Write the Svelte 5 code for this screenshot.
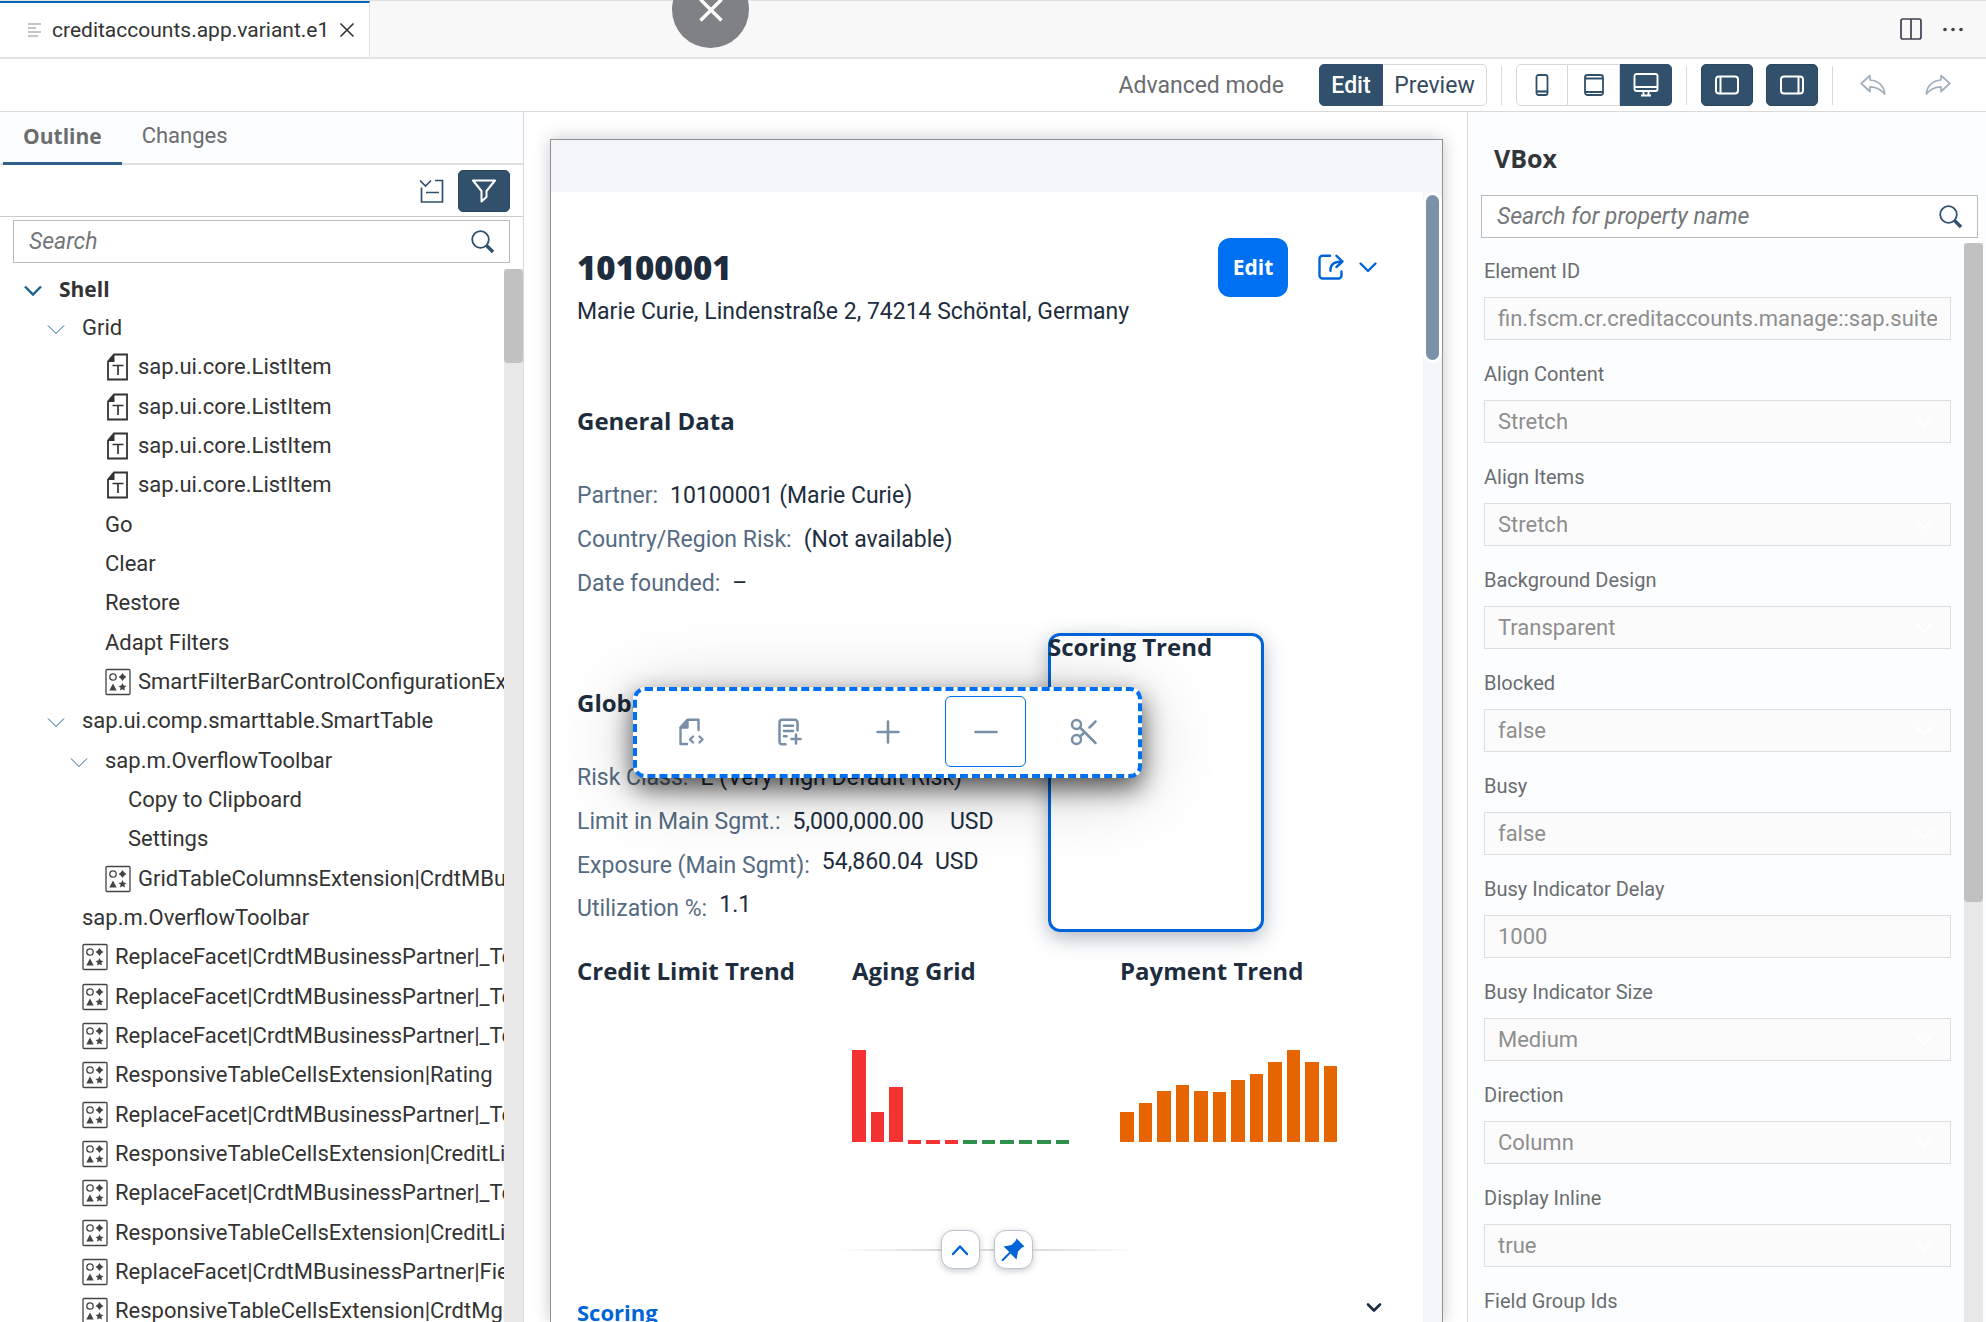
<script>
  const tree = [
    { level: 0, text: 'Shell', open: true },
    { level: 1, text: 'Grid', open: true },
    { level: 2, text: 'sap.ui.core.ListItem', icon: 'text' },
    { level: 2, text: 'sap.ui.core.ListItem', icon: 'text' },
    { level: 2, text: 'sap.ui.core.ListItem', icon: 'text' },
    { level: 2, text: 'sap.ui.core.ListItem', icon: 'text' },
    { level: 2, text: 'Go' },
    { level: 2, text: 'Clear' },
    { level: 2, text: 'Restore' },
    { level: 2, text: 'Adapt Filters' },
    { level: 2, text: 'SmartFilterBarControlConfigurationExtension', icon: 'ext' },
    { level: 1, text: 'sap.ui.comp.smarttable.SmartTable', open: true },
    { level: 2, text: 'sap.m.OverflowToolbar', open: true },
    { level: 3, text: 'Copy to Clipboard' },
    { level: 3, text: 'Settings' },
    { level: 2, text: 'GridTableColumnsExtension|CrdtMBusinessPartner', icon: 'ext' },
    { level: 1, text: 'sap.m.OverflowToolbar' },
    { level: 1, text: 'ReplaceFacet|CrdtMBusinessPartner|_Text', icon: 'ext' },
    { level: 1, text: 'ReplaceFacet|CrdtMBusinessPartner|_Text', icon: 'ext' },
    { level: 1, text: 'ReplaceFacet|CrdtMBusinessPartner|_Text', icon: 'ext' },
    { level: 1, text: 'ResponsiveTableCellsExtension|Rating', icon: 'ext' },
    { level: 1, text: 'ReplaceFacet|CrdtMBusinessPartner|_Text', icon: 'ext' },
    { level: 1, text: 'ResponsiveTableCellsExtension|CreditLimit', icon: 'ext' },
    { level: 1, text: 'ReplaceFacet|CrdtMBusinessPartner|_Text', icon: 'ext' },
    { level: 1, text: 'ResponsiveTableCellsExtension|CreditLimit', icon: 'ext' },
    { level: 1, text: 'ReplaceFacet|CrdtMBusinessPartner|Field', icon: 'ext' },
    { level: 1, text: 'ResponsiveTableCellsExtension|CrdtMgmt', icon: 'ext' }
  ];

  const props = [
    { name: 'Element ID', value: 'fin.fscm.cr.creditaccounts.manage::sap.suite.ui', kind: 'input' },
    { name: 'Align Content', value: 'Stretch', kind: 'select' },
    { name: 'Align Items', value: 'Stretch', kind: 'select' },
    { name: 'Background Design', value: 'Transparent', kind: 'select' },
    { name: 'Blocked', value: 'false', kind: 'select' },
    { name: 'Busy', value: 'false', kind: 'select' },
    { name: 'Busy Indicator Delay', value: '1000', kind: 'input' },
    { name: 'Busy Indicator Size', value: 'Medium', kind: 'select' },
    { name: 'Direction', value: 'Column', kind: 'select' },
    { name: 'Display Inline', value: 'true', kind: 'select' },
    { name: 'Field Group Ids', value: '', kind: 'input' }
  ];

  const aging = [
    { h: 92, tone: 'bad' }, { h: 30, tone: 'bad' }, { h: 55, tone: 'bad' },
    { h: 0, tone: 'bad' }, { h: 0, tone: 'bad' }, { h: 0, tone: 'bad' },
    { h: 0, tone: 'good' }, { h: 0, tone: 'good' }, { h: 0, tone: 'good' },
    { h: 0, tone: 'good' }, { h: 0, tone: 'good' }, { h: 0, tone: 'good' }
  ];
  const payment = [30, 39, 51, 57, 51, 50, 62, 68, 80, 92, 80, 76].map((h) => ({ h, tone: 'warn' }));
</script>

{#snippet magnifier()}
  <svg class="magnifier" width="26" height="26" viewBox="0 0 26 26" fill="none" aria-hidden="true">
    <circle cx="10.5" cy="10.5" r="8.3" stroke-width="1.8" />
    <path d="M16.5 16.5L23 23" stroke-width="3.4" />
  </svg>
{/snippet}

{#snippet chart(bars)}
  <div class="chart">
    {#each bars as bar}
      <span class="bar {bar.tone}" class:zero={bar.h === 0} style:height="{bar.h || 4}px"></span>
    {/each}
  </div>
{/snippet}

<div class="app">
  <header class="tabstrip">
    <div class="file-tab">
      <svg width="14" height="16" viewBox="0 0 14 16" fill="none" stroke="#c5c5c5" stroke-width="2" aria-hidden="true">
        <path d="M0 2h13M0 6h8M0 10h13M0 14h10" />
      </svg>
      <span>creditaccounts.app.variant.e1</span>
      <button class="plain" aria-label="Close tab">
        <svg width="16" height="16" viewBox="0 0 16 16" fill="none" stroke="#333" stroke-width="1.6"><path d="M1.5 1.5l13 13M14.5 1.5l-13 13" /></svg>
      </button>
    </div>
    <div class="tab-actions">
      <button class="plain" aria-label="Split editor">
        <svg width="22" height="22" viewBox="0 0 22 22" fill="none" stroke="#3f4150" stroke-width="1.7"><rect x="1" y="1" width="20" height="20" rx="2" /><path d="M11 1v20" /></svg>
      </button>
      <button class="plain" aria-label="More actions">
        <svg width="22" height="22" viewBox="0 0 22 22" fill="#424242"><circle cx="3" cy="11.5" r="1.8" /><circle cx="11" cy="11.5" r="1.8" /><circle cx="19" cy="11.5" r="1.8" /></svg>
      </button>
    </div>
    <button class="bubble" aria-label="Dismiss">
      <svg width="24" height="24" viewBox="0 0 24 24" fill="none" stroke="#fff" stroke-width="3.4"><path d="M1.5 1.5l21 21M22.5 1.5l-21 21" /></svg>
    </button>
  </header>

  <div class="toolbar">
    <button class="advanced plain">Advanced mode</button>
    <div class="segmented mode">
      <button class="on">Edit</button>
      <button>Preview</button>
    </div>
    <span class="sep"></span>
    <div class="segmented devices">
      <button aria-label="Phone">
        <svg width="14" height="24" viewBox="0 0 14 24" fill="none" stroke="#30506b" stroke-width="1.8"><rect x="1.5" y="2" width="11" height="20" rx="2" /><path d="M1.5 18.5h11" stroke-width="2.2" /></svg>
      </button>
      <button aria-label="Tablet">
        <svg width="20" height="24" viewBox="0 0 20 24" fill="none" stroke="#30506b" stroke-width="1.8"><rect x="1" y="2" width="18" height="20" rx="2.5" /><path d="M1 5.5h18M1 19h18" /></svg>
      </button>
      <button class="on" aria-label="Desktop">
        <svg width="26" height="24" viewBox="0 0 26 24" fill="none" stroke="#fff" stroke-width="1.9"><rect x="1.5" y="1" width="23" height="17" rx="2" /><path d="M1.5 14h23M10.5 18.5v4M15.5 18.5v4M8 22.5h10" /></svg>
      </button>
    </div>
    <span class="sep"></span>
    <button class="toggle" aria-label="Toggle left panel">
      <svg width="24" height="20" viewBox="0 0 24 20" fill="none" stroke="#fff" stroke-width="2"><rect x="1" y="1.5" width="22" height="17" rx="3" /><path d="M5.5 1.5v17" /></svg>
    </button>
    <button class="toggle" aria-label="Toggle right panel">
      <svg width="24" height="20" viewBox="0 0 24 20" fill="none" stroke="#fff" stroke-width="2"><rect x="1" y="1.5" width="22" height="17" rx="3" /><path d="M18.5 1.5v17" /></svg>
    </button>
    <span class="sep"></span>
    <button class="history" aria-label="Undo">
      <svg width="26" height="22" viewBox="0 0 26 22" fill="none" stroke="#a3afba" stroke-width="1.7" stroke-linejoin="round"><path d="M10 1.5L1.2 9.5L10 17.5V12.8C16 12.6 20.5 15 24.6 20C24 12 18.5 6.6 10 6Z" /></svg>
    </button>
    <button class="history" aria-label="Redo">
      <svg width="26" height="22" viewBox="0 0 26 22" fill="none" stroke="#a3afba" stroke-width="1.7" stroke-linejoin="round"><path d="M16 1.5L24.8 9.5L16 17.5V12.8C10 12.6 5.5 15 1.4 20C2 12 7.5 6.6 16 6Z" /></svg>
    </button>
  </div>

  <div class="workspace">
    <aside class="outline">
      <nav class="tabs">
        <button class="tab active">Outline</button>
        <button class="tab">Changes</button>
      </nav>
      <div class="outline-tools">
        <button class="plain" aria-label="Collapse all">
          <svg width="26" height="26" viewBox="0 0 26 26" fill="none" stroke="#30506b" stroke-width="1.7"><path d="M1 2.5l5.5 5.5L12 2.5M16 2.5h7.5V24H2.5V9.5M7 14.5h13" /></svg>
        </button>
        <button class="filter" aria-label="Filter">
          <svg width="26" height="26" viewBox="0 0 26 26" fill="none" stroke="#fff" stroke-width="2" stroke-linejoin="round"><path d="M2 2.5h22L15.5 13v6l-5 4.5V13Z" /></svg>
        </button>
      </div>
      <div class="search outline-search">
        <input type="text" placeholder="Search" aria-label="Search outline" />
        {@render magnifier()}
      </div>
      <div class="tree-area">
        <ul class="tree">
          {#each tree as node}
            <li class="node level{node.level}">
              <span class="twisty">
                {#if node.open}
                  <button class="plain" aria-label="Collapse {node.text}">
                    <svg width="20" height="12" viewBox="0 0 20 12" fill="none" stroke="#1c6190"><path d="M2 1.5l8 8l8-8" /></svg>
                  </button>
                {/if}
              </span>
              {#if node.icon === 'text'}
                <svg class="node-icon" width="26" height="28" viewBox="0 0 26 28" aria-hidden="true">
                  <path d="M9 1.5H22V26.5H3V8.5Z" fill="none" stroke="#333" stroke-width="1.8" />
                  <path d="M9.5 1V9H2.5Z" fill="#333" />
                  <path d="M7.5 12.5h11M13 12.5V22" fill="none" stroke="#333" stroke-width="1.7" />
                </svg>
              {:else if node.icon === 'ext'}
                <svg class="node-icon" width="26" height="28" viewBox="0 0 26 28" aria-hidden="true">
                  <rect x="1" y="1.500" width="24" height="25" rx="1" fill="none" stroke="#444" stroke-width="1.3" />
                  <circle cx="8" cy="9" r="3.2" fill="none" stroke="#444" stroke-width="1.3" />
                  <path d="M17.5 5l1.6 2.300l2.300 1.700l-2.300 1.700l-1.600 2.300l-1.600-2.300l-2.300-1.700l2.300-1.700Z" fill="#444" />
                  <path d="M8 15.500l3.700 7H4.300Z" fill="#444" />
                  <path d="M17.5 15l1.200 2.600l2.800 .300l-2.100 1.900l.6 2.800l-2.500-1.400l-2.500 1.400l.6-2.800l-2.100-1.900l2.800-.3Z" fill="#444" />
                </svg>
              {/if}
              <span class="node-text">{node.text}</span>
            </li>
          {/each}
        </ul>
        <div class="scrollbar"><div class="thumb"></div></div>
      </div>
    </aside>

    <main class="canvas">
      <div class="frame">
        <div class="shellbar"></div>
        <div class="page">
          <div class="content">
            <div class="title-row">
              <div class="title-block">
                <h1>10100001</h1>
                <p>Marie Curie, Lindenstraße 2, 74214 Schöntal, Germany</p>
              </div>
              <button class="primary">Edit</button>
              <button class="plain share" aria-label="Share">
                <svg width="26" height="26" viewBox="0 0 26 26" fill="none" stroke="#0064d9" stroke-width="2.4" stroke-linecap="round" stroke-linejoin="round"><path d="M12 1.8H4.5a3 3 0 0 0-3 3V21.5a3 3 0 0 0 3 3H20.5a3 3 0 0 0 3-3V17.5" /><path d="M12.5 17C12 11 15.5 7.5 24.5 7.5M18.5 1.8l6 5.7l-6 5.5" /></svg>
                <svg width="28" height="26" viewBox="0 0 28 26" fill="none" stroke="#0064d9" stroke-width="2.4" stroke-linecap="round" stroke-linejoin="round"><path d="M6.5 9.5L14 17l7.5-7.5" /></svg>
              </button>
            </div>

            <section class="group general">
              <h2>General Data</h2>
              <div class="field"><span class="key">Partner:</span><span>10100001 (Marie Curie)</span></div>
              <div class="field"><span class="key">Country/Region Risk:</span><span>(Not available)</span></div>
              <div class="field"><span class="key">Date founded:</span><span>–</span></div>
            </section>

            <div class="facets">
              <section class="group global">
                <h2>Global Data</h2>
                <div class="field"><span class="key">Risk Class:</span><span>E (Very High Default Risk)</span></div>
                <div class="field"><span class="key">Limit in Main Sgmt.:</span><span>5,000,000.00</span><span class="unit">USD</span></div>
                <div class="field measure"><span class="key">Exposure (Main Sgmt):</span><span>54,860.04</span><span>USD</span></div>
                <div class="field measure"><span class="key">Utilization %:</span><span>1.1</span></div>
              </section>
              <section class="selected">
                <h2>Scoring Trend</h2>
                <div class="context" role="toolbar" aria-label="Element actions">
                  <button aria-label="Add fragment">
                    <svg width="28" height="28" viewBox="0 0 28 28" fill="none" stroke="#788fa6" stroke-width="2.4" stroke-linecap="round" stroke-linejoin="round"><path d="M9 26H2.500V9.500L9.500 1.800H20.500V12" /><path d="M9.500 2V9.500H2.800Z" fill="#788fa6" /><path d="M15 18.500l-3 3l3 3M21.500 18.500l3 3l-3 3" /></svg>
                  </button>
                  <button aria-label="Add section">
                    <svg width="28" height="28" viewBox="0 0 28 28" fill="none" stroke="#788fa6" stroke-width="2.500" stroke-linecap="round" stroke-linejoin="round"><path d="M9.500 26.200H6a2.500 2.500 0 0 1-2.500-2.500V4.300a2.500 2.500 0 0 1 2.500-2.500H19a2.500 2.500 0 0 1 2.500 2.500V12.500M8 7.800h9M8 13h9M8 18.300h2.500M15.500 21h9M20 16.500v9" /></svg>
                  </button>
                  <button aria-label="Add">
                    <svg width="28" height="28" viewBox="0 0 28 28" fill="none" stroke="#788fa6" stroke-width="2.600" stroke-linecap="round"><path d="M3.500 14h21M14 3.500v21" /></svg>
                  </button>
                  <button class="focused" aria-label="Remove">
                    <svg width="28" height="28" viewBox="0 0 28 28" fill="none" stroke="#788fa6" stroke-width="2.600" stroke-linecap="round"><path d="M3.500 14h21" /></svg>
                  </button>
                  <button aria-label="Cut">
                    <svg width="28" height="28" viewBox="0 0 28 28" fill="none" stroke="#788fa6" stroke-width="2.500" stroke-linecap="round"><circle cx="6.500" cy="6.500" r="4.500" /><circle cx="6.500" cy="21.500" r="4.500" /><path d="M10 9.500L25.500 25M10 18.500l4.500-4M19.500 9.500L25.500 3.500" /></svg>
                  </button>
                </div>
              </section>
            </div>

            <div class="trends">
              <section><h2>Credit Limit Trend</h2></section>
              <section><h2>Aging Grid</h2>{@render chart(aging)}</section>
              <section><h2>Payment Trend</h2>{@render chart(payment)}</section>
            </div>

            <div class="header-controls">
              <span class="rule left"></span>
              <button class="knob" aria-label="Collapse header">
                <svg width="20" height="20" viewBox="0 0 20 20" fill="none" stroke="#0064d9" stroke-width="2.400" stroke-linecap="round" stroke-linejoin="round"><path d="M3 14l7-7.500L17 14" /></svg>
              </button>
              <span class="rule mid"></span>
              <button class="knob" aria-label="Pin header">
                <svg width="24" height="24" viewBox="0 0 24 24" fill="#0064d9"><path d="M15.500 0.500L23.500 8.500L21 9.500L17 13.500L15.500 21.500L9.500 15.500L2.500 22.700Q1.300 23.500 .7 22.500Q.5 21.700 1.300 21L8.300 14L2.500 8.500L10.500 7L14.500 3Z" /></svg>
              </button>
              <span class="rule right"></span>
            </div>

            <div class="anchor">
              <a href="#scoring">Scoring</a>
              <button class="plain" aria-label="Show sections">
                <svg width="16" height="12" viewBox="0 0 16 12" fill="none" stroke="#1d2d3e" stroke-width="2.600" stroke-linecap="round" stroke-linejoin="round"><path d="M2 2.500l6 6l6-6" /></svg>
              </button>
            </div>
          </div>
          <div class="page-scroll"><div class="page-thumb"></div></div>
        </div>
      </div>
    </main>

    <aside class="properties">
      <h3>VBox</h3>
      <div class="search">
        <input type="text" placeholder="Search for property name" aria-label="Search for property name" />
        {@render magnifier()}
      </div>
      <div class="props-area">
        <div class="props">
          {#each props as p, i}
            <div class="prop">
              <label for="prop-{i}">{p.name}</label>
              {#if p.kind === 'select'}
                <div class="select">
                  <select id="prop-{i}" disabled><option>{p.value}</option></select>
                  <svg width="20" height="12" viewBox="0 0 20 12" fill="none" stroke="#fff" stroke-width="2" aria-hidden="true"><path d="M2 1.500l8 8l8-8" /></svg>
                </div>
              {:else}
                <input id="prop-{i}" type="text" value={p.value} disabled />
              {/if}
            </div>
          {/each}
        </div>
        <div class="scrollbar"><div class="thumb"></div></div>
      </div>
    </aside>
  </div>
</div>

<style>
  :global(body) { background: #fff; }
  * { box-sizing: border-box; }
  .app {
    height: 100vh;
    display: flex;
    flex-direction: column;
    overflow: hidden;
    font: 22px/28px Roboto, sans-serif;
    color: #333;
  }
  button, input, select { font: inherit; color: inherit; margin: 0; }
  button { display: flex; align-items: center; justify-content: center; cursor: pointer; }
  .plain { border: 0; padding: 0; background: none; }
  svg { display: block; flex: none; }
  h1, h2, h3, p, ul { margin: 0; padding: 0; }

  .tabstrip {
    position: relative;
    flex: none;
    display: flex;
    justify-content: space-between;
    height: 59px;
    background: #f8f8f8;
    border-top: 1px solid #e2e2e2;
    border-bottom: 2px solid #e4e4e4;
  }
  .file-tab {
    display: flex;
    align-items: center;
    gap: 10px;
    height: 56px;
    padding: 0 14px 0 28px;
    background: #fff;
    border-top: 2px solid #0064b7;
    border-right: 1px solid #e0e0e0;
    font-size: 21px;
  }
  .tab-actions { display: flex; align-items: center; gap: 20px; padding-right: 22px; }
  .bubble {
    position: absolute;
    left: 672px;
    top: -30px;
    width: 77px;
    height: 77px;
    border: 0;
    border-radius: 50%;
    background: #808184;
  }

  .toolbar {
    flex: none;
    display: flex;
    align-items: center;
    justify-content: flex-end;
    gap: 13px;
    height: 53px;
    padding-right: 22px;
    border-bottom: 1px solid #d9d9d9;
  }
  .advanced { margin-right: 22px; padding-top: 2px; font-size: 23px; color: #6a6d70; }
  .sep { width: 1px; height: 39px; margin: 0 1px; background: #d9d9d9; }
  .segmented { display: flex; height: 42px; }
  .segmented button {
    padding: 0;
    background: #fff;
    border: 1px solid #d5d7d9;
    border-left-width: 0;
    color: #354a5f;
  }
  .segmented button:first-child { border-left-width: 1px; border-radius: 5px 0 0 5px; }
  .segmented button:last-child { border-radius: 0 5px 5px 0; }
  .segmented .on, .segmented .on:first-child { background: #30506b; border-color: #30506b; color: #fff; }
  .mode button { width: 104px; padding-top: 2px; font-size: 23px; }
  .mode button:first-child { width: 64px; font-weight: 500; }
  .devices button { width: 52px; }
  .toggle, .filter { width: 52px; height: 42px; padding: 0; border: 1px solid #2a4760; border-radius: 5px; background: #30506b; }
  .history { width: 52px; height: 42px; padding: 0; border: 0; background: none; }

  .workspace { flex: 1; min-height: 0; display: flex; }

  .outline { flex: none; width: 524px; display: flex; flex-direction: column; border-right: 1px solid #d9d9d9; }
  .tabs { flex: none; display: flex; height: 53px; padding-left: 3px; background: #fcfdfe; border-bottom: 2px solid #dfe1e3; }
  .tab { height: 53px; padding: 0 20px 2px; border: 0; border-bottom: 3px solid transparent; background: none; color: #6a6d70; }
  .tab.active { border-bottom-color: #30608c; font: 700 21px/28px "Open Sans", sans-serif; }
  .outline-tools { flex: none; display: flex; align-items: center; justify-content: flex-end; gap: 13px; height: 52px; padding-right: 13px; border-bottom: 1px solid #ccc; }

  .search { flex: none; display: flex; align-items: center; height: 43px; padding: 0 13px; background: #fff; border: 1px solid #b9bbbd; }
  .search input { flex: 1; min-width: 0; padding: 0 2px; border: 0; outline: 0; background: none; font-size: 23px; font-style: italic; }
  .search input::placeholder { color: #74777a; opacity: 1; }
  .magnifier { stroke: #30506b; }
  .outline-search { margin: 3px 13px 6px; }

  .tree-area { flex: 1; min-height: 0; display: flex; overflow: hidden; }
  .tree { flex: 1; min-width: 0; overflow: hidden; list-style: none; }
  .node { display: flex; align-items: center; height: 39px; white-space: nowrap; }
  .node:nth-child(3n) { height: 40px; }
  .level0 { padding-left: 23px; font: 700 21px/28px "Open Sans", sans-serif; }
  .level0 svg { stroke-width: 2.4; }
  .level1 { padding-left: 46px; }
  .level2 { padding-left: 69px; }
  .level3 { padding-left: 92px; }
  .twisty { flex: none; width: 36px; padding-top: 4px; }
  .node-icon { margin-right: 7px; }
  .scrollbar { flex: none; width: 19px; background: #e8e8e8; }
  .thumb { background: #c1c1c1; border-radius: 4px; height: 94px; }

  .canvas { flex: 1; min-width: 0; display: flex; padding: 27px 24px 0 26px; overflow: hidden; }
  .frame {
    flex: 1;
    min-width: 0;
    display: flex;
    flex-direction: column;
    background: #fff;
    border: 1px solid #8f9295;
    border-bottom: 0;
    box-shadow: 0 0 16px rgba(0, 0, 0, .22);
    color: #1d2d3e;
    font-size: 23px;
  }
  .shellbar { flex: none; height: 52px; background: #f4f5f7; }
  .page { flex: 1; min-height: 0; display: flex; overflow: hidden; }
  .content { flex: 1; min-width: 0; padding: 46px 41px 0 26px; }
  .page-scroll { flex: none; width: 19px; padding: 3px 3px 0; background: #f4f5f8; }
  .page-thumb { height: 165px; border-radius: 8px; background: #7b91a8; box-shadow: 0 0 0 3px #fff; }

  .title-row { display: flex; align-items: flex-start; }
  .title-block { flex: 1; min-width: 0; padding-top: 10px; }
  h1 { margin-bottom: 10px; font: 800 33px/40px "Open Sans", sans-serif; }
  h2 { font: 700 24px/28px "Open Sans", sans-serif; white-space: nowrap; }
  .primary {
    width: 70px;
    height: 59px;
    margin-right: 30px;
    padding: 0 0 2px;
    border: 0;
    border-radius: 12px;
    background: #0070f2;
    color: #fff;
    font: 700 21px/28px "Open Sans", sans-serif;
  }
  .share { gap: 10px; padding-top: 16px; }

  .general { margin-top: 81px; }
  .group h2 { margin-bottom: 39px; }
  .field { display: flex; align-items: center; gap: 12px; height: 44px; white-space: nowrap; }
  .key { color: #556b82; }
  .unit { margin-left: 14px; }
  .measure { height: 43px; }
  .measure span:not(.key) { padding-bottom: 8px; }

  .facets { display: flex; margin-top: 27px; }
  .global { flex: none; width: 471px; padding-top: 56px; }
  .selected {
    position: relative;
    width: 216px;
    height: 299px;
    border-radius: 12px;
    background: #fff;
    box-shadow: inset 0 0 0 3px #0064d9, 0 6px 20px rgba(34, 53, 72, .35);
  }
  .context {
    position: absolute;
    z-index: 1;
    left: -415px;
    top: 54px;
    display: flex;
    align-items: center;
    gap: 17px;
    height: 91px;
    padding: 0 14px 2px;
    border: 4px dashed #0070f2;
    border-radius: 12px;
    background: #fff;
    box-shadow: 0 10px 26px rgba(0, 0, 0, .65), 0 10px 80px rgba(0, 0, 0, .2);
  }
  .context button { width: 81px; height: 71px; padding: 0; border: 1px solid transparent; border-radius: 6px; background: none; }
  .context .focused { border-color: #0070f2; }

  .trends { display: grid; grid-template-columns: 275px 268px 1fr; margin-top: 25px; }
  .chart { display: grid; grid-template-columns: repeat(12, 1fr); align-items: end; gap: 5px; width: 217px; height: 92px; margin-top: 65px; }
  .bad { background: #f53232; }
  .good { background: #30914c; }
  .warn { background: #e76500; }
  .zero { margin-bottom: -2px; }

  .header-controls { display: flex; align-items: center; justify-content: center; margin: 88px 0 0 14px; }
  .rule { height: 2px; background: #d9d9d9; }
  .rule.left { width: 104px; background: linear-gradient(to right, transparent, #d9d9d9); }
  .rule.mid { width: 14px; }
  .rule.right { width: 104px; background: linear-gradient(to left, transparent, #d9d9d9); }
  .knob { width: 39px; height: 39px; padding: 0; border: 1px solid #bcc3ca; border-radius: 12px; background: #fff; box-shadow: 0 2px 6px rgba(34, 53, 72, .25); }

  .anchor { display: flex; align-items: center; justify-content: space-between; margin-top: 27px; }
  .anchor a { color: #0064d9; font: 700 22px/32px "Open Sans", sans-serif; text-decoration: none; }
  .anchor button { padding-bottom: 8px; }

  .properties { flex: none; width: 519px; display: flex; flex-direction: column; border-left: 1px solid #d9d9d9; background: #fcfdfe; }
  .properties h3 { flex: none; padding: 30px 26px 21px; color: #32363a; font: 700 25px/32px "Open Sans", sans-serif; }
  .properties .search { margin: 0 8px 5px 13px; }
  .props-area { flex: 1; min-height: 0; display: flex; padding-right: 3px; overflow: hidden; }
  .props { flex: 1; min-width: 0; padding: 16px 13px 0 16px; }
  .prop { display: flex; flex-direction: column; gap: 14px; margin-bottom: 22px; }
  .prop label { font-size: 20px; line-height: 24px; color: #6a6d70; }
  .prop input, .prop select {
    appearance: none;
    width: 100%;
    height: 43px;
    padding: 0 13px;
    border: 1px solid #dcdfe1;
    border-radius: 0;
    outline: 0;
    background: #fbfbfb;
    color: #8e8e8f;
    opacity: 1;
  }
  .select { display: grid; grid-template-columns: 1fr 54px; align-items: center; }
  .select select { grid-area: 1 / 1 / 2 / 3; }
  .select svg { grid-area: 1 / 2; justify-self: center; }
  .properties .thumb { height: 659px; }
</style>
